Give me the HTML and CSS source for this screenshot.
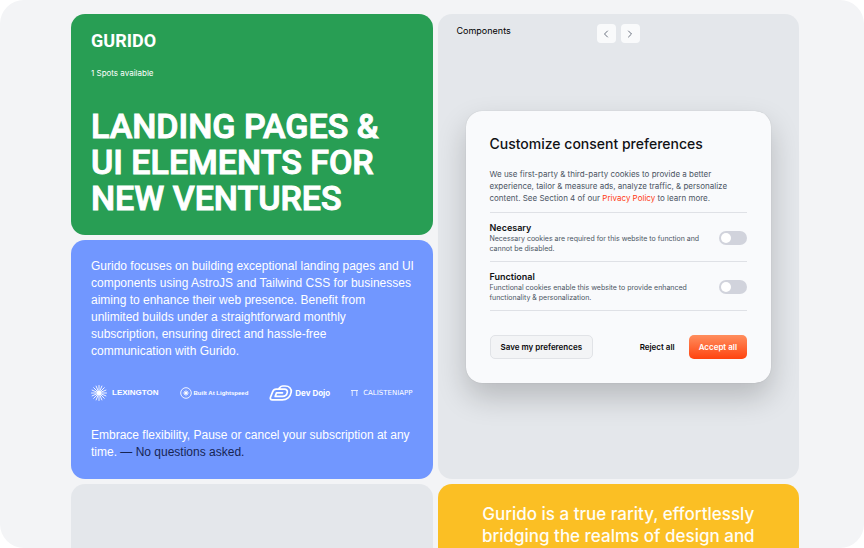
FILE: index.html
```
<!DOCTYPE html>
<html lang="en">
<head>
<meta charset="utf-8">
<meta name="viewport" content="width=device-width, initial-scale=1">
<title>Gurido</title>
<link rel="stylesheet" href="styles.css">
</head>
<body>
<div class="page">
  <main class="bento">
    <header class="card hero">
      <a class="brand" href="#">GURIDO</a>
      <p class="spots">1 Spots available</p>
      <h1 class="headline">LANDING PAGES &amp;<br>UI ELEMENTS FOR<br>NEW VENTURES</h1>
    </header>

    <section class="card about">
      <p>Gurido focuses on building exceptional landing pages and UI components using AstroJS and Tailwind CSS for businesses<br>aiming to enhance their web presence. Benefit from<br>unlimited builds under a straightforward monthly<br>subscription, ensuring direct and hassle-free<br>communication with Gurido.</p>
      <ul class="clients">
        <li class="client client-lexington">
          <svg width="16" height="16" viewBox="0 0 16 16" fill="none" stroke="currentColor" stroke-linecap="round">
            <circle cx="8" cy="8" r="2" fill="currentColor" stroke="none"/>
            <path stroke-width=".9" d="M8 .5v15M.5 8h15M2.7 2.7l10.600 10.600M13.300 2.700L2.700 13.300M5.130 1.070l5.740 13.860M10.870 1.070L5.130 14.930M1.070 5.130l13.860 5.740M1.070 10.870l13.860-5.740"/>
          </svg>
          <span>LEXINGTON</span>
        </li>
        <li class="client client-lightspeed">
          <svg width="12" height="12" viewBox="0 0 12 12" fill="none" stroke="currentColor">
            <circle cx="6" cy="6" r="5.300" stroke-width=".9"/>
            <circle cx="6" cy="6" r="1.600" fill="currentColor" stroke="none"/>
            <path stroke-width=".7" d="M6 2.800v6.400M2.800 6h6.400M3.800 3.800l4.400 4.400M8.200 3.800L3.800 8.200"/>
          </svg>
          <span>Built At Lightspeed</span>
        </li>
        <li class="client client-devdojo">
          <svg width="24" height="16" viewBox="0 0 24 16" fill="none" stroke="currentColor" stroke-width="1.700" stroke-linejoin="round" stroke-linecap="round">
            <path d="M9.500 4L11 2.300Q12 1 13.700 1h2.500c4 0 6.600 2.600 6 6.200-.7 4.600-4.400 7.600-9 7.600H3.300C1.400 14.800.9 13.600 1.500 12.200L3.700 6.600Q4.700 4.200 7.200 4.200h8.300c2 0 3.200 1.300 2.800 3.200-.5 2.600-2.200 4-4.800 4H6.200L7.500 7.800h6"/>
          </svg>
          <span>Dev Dojo</span>
        </li>
        <li class="client client-calisteniapp">
          <svg width="7" height="6" viewBox="0 0 7 6" fill="none" stroke="currentColor" stroke-width=".8">
            <path d="M0 .5h7M1.200 .5V6M5.800 .5V6"/>
          </svg>
          <span>CALISTENIAPP</span>
        </li>
      </ul>
      <p>Embrace flexibility, Pause or cancel your subscription at any time. <span class="aside">— No questions asked.</span></p>
    </section>

    <section class="card showcase">
      <div class="showcase-bar">
        <h2 class="showcase-title">Components</h2>
        <div class="pager">
          <button type="button" aria-label="Previous"><svg width="10" height="10" viewBox="0 0 10 10"><path d="M6.500 2L3.500 5l3 3"/></svg></button>
          <button type="button" aria-label="Next"><svg width="10" height="10" viewBox="0 0 10 10"><path d="M3.500 2l3 3-3 3"/></svg></button>
        </div>
      </div>
      <form class="consent">
        <h3 class="consent-title">Customize consent preferences</h3>
        <p class="consent-text">We use first-party &amp; third-party cookies to provide a better experience, tailor &amp; measure ads, analyze traffic, &amp; personalize content. See Section 4 of our <a href="#">Privacy Policy</a> to learn more.</p>
        <div class="options">
          <div class="option">
            <label for="necessary"><strong>Necesary</strong><span>Necessary cookies are required for this website to function and cannot be disabled.</span></label>
            <input class="switch" type="checkbox" role="switch" id="necessary">
          </div>
          <div class="option">
            <label for="functional"><strong>Functional</strong><span>Functional cookies enable this website to provide enhanced functionality &amp; personalization.</span></label>
            <input class="switch" type="checkbox" role="switch" id="functional">
          </div>
        </div>
        <div class="actions">
          <button class="btn btn-save" type="button">Save my preferences</button>
          <button class="btn btn-reject" type="button">Reject all</button>
          <button class="btn btn-accept" type="button">Accept all</button>
        </div>
      </form>
    </section>

    <section class="card preview"></section>

    <blockquote class="card quote">Gurido is a true rarity, effortlessly bridging the realms of design and</blockquote>
  </main>
</div>
</body>
</html>
```
FILE: styles.css
```
* { box-sizing: border-box; }

body, h1, h2, h3, p, ul, blockquote { margin: 0; }

body {
  background: #fff;
  font-family: Inter, "Liberation Sans", sans-serif;
  -webkit-font-smoothing: antialiased;
}

button { font: inherit; padding: 0; border: 0; }

.page {
  height: 100vh;
  overflow: hidden;
  padding: 14px 65px 0 71px;
  border-radius: 24px;
  background: #f3f4f6;
}

.bento {
  display: grid;
  grid-template-columns: 1fr 1fr;
  gap: 5px;
}

.card { border-radius: 14px; }

/* Hero */
.hero {
  display: flex;
  flex-direction: column;
  align-items: flex-start;
  padding: 17px 20px 19px;
  background: #289e54;
  color: #fff;
}

.brand, .headline {
  font-family: Roboto, sans-serif;
  font-weight: 500;
}

.brand {
  color: inherit;
  font-size: 18px;
  font-weight: 700;
  line-height: 20px;
  text-decoration: none;
}

.spots {
  margin-top: 16px;
  font-size: 8px;
  line-height: 12px;
}

.headline {
  margin-top: 29px;
  font-size: 34px;
  line-height: 36px;
  -webkit-text-stroke: 1px #fff;
  stroke-linejoin: round;
}

/* About */
.about {
  padding: 18px 14px 18px 20px;
  background: #7197ff;
  color: #fff;
  font-family: "Liberation Sans", Arial, sans-serif;
  font-size: 12px;
  line-height: 17px;
}

.aside { color: #172554; }

.clients {
  display: flex;
  justify-content: space-between;
  align-items: center;
  margin: 25px 6px 26px 0;
  padding: 0;
  list-style: none;
}

.client {
  display: flex;
  align-items: center;
  height: 16px;
  font-weight: 700;
  line-height: 12px;
  white-space: nowrap;
}

.client-lexington { gap: 5px; font-size: 8px; }
.client-lightspeed { gap: 2px; font-size: 6px; }
.client-devdojo {
  gap: 2px;
  font-family: Inter, sans-serif;
  font-size: 8px;
}
.client-calisteniapp {
  gap: 5px;
  font-family: "DejaVu Sans", sans-serif;
  font-size: 7px;
  font-weight: 400;
}

/* Showcase */
.showcase {
  grid-column: 2;
  grid-row: 1 / span 2;
  padding-top: 10px;
  background: #e4e7eb;
}

.showcase-bar {
  display: grid;
  grid-template-columns: 1fr auto 1fr;
  align-items: start;
  padding: 0 19px;
}

.showcase-title {
  font-size: 9px;
  font-weight: 400;
  line-height: 14px;
}

.pager { display: flex; gap: 5px; }

.pager button {
  display: grid;
  place-items: center;
  width: 19px;
  height: 19px;
  border-radius: 4px;
  background: #f9fafb;
}

.pager path {
  fill: none;
  stroke: #6b7280;
  stroke-linecap: round;
  stroke-linejoin: round;
}

/* Consent dialog */
.consent {
  margin: 68px 28px 0;
  padding: 24px;
  border-radius: 16px;
  background: #f9fafc;
  box-shadow: 0 14px 30px rgba(0, 0, 0, .2), 0 0 1px rgba(0, 0, 0, .2);
}

.consent-title {
  color: #111215;
  font-size: 14px;
  font-weight: 500;
  line-height: 18px;
}

.consent-text {
  margin-top: 15px;
  color: #4b5563;
  font-size: 8px;
  line-height: 12px;
}

.consent-text a { color: #ff3b14; text-decoration: none; }

.options {
  margin-top: 8px;
  border-bottom: 1px solid #dfe1e6;
}

.option {
  display: flex;
  align-items: center;
  justify-content: space-between;
  gap: 16px;
  padding: 8px 0 7px;
  border-top: 1px solid #dfe1e6;
}

.option label { flex: 1; }

.option strong {
  display: block;
  color: #111215;
  font-size: 9px;
  font-weight: 600;
  line-height: 13px;
}

.option span {
  display: block;
  color: #4b5563;
  font-size: 7px;
  line-height: 10px;
}

.switch {
  appearance: none;
  display: flex;
  align-items: center;
  width: 28px;
  height: 14px;
  margin: 0;
  padding: 2px;
  border-radius: 7px;
  background: #d1d3dc;
}

.switch::before {
  content: "";
  width: 10px;
  height: 10px;
  border-radius: 50%;
  background: #fff;
}

.switch:checked { justify-content: flex-end; background: #ff4612; }

.actions {
  display: flex;
  align-items: center;
  margin-top: 24px;
}

.btn {
  height: 24px;
  padding: 0 10px;
  border-radius: 5px;
  background: none;
  color: #09090b;
  font-size: 8px;
  font-weight: 600;
  white-space: nowrap;
}

.btn-save {
  margin-right: auto;
  border: 1px solid #e1e3e7;
  background: #f3f4f6;
}

.btn-reject { padding: 0 14px; }

.btn-accept {
  background: linear-gradient(#ff8e5e, #ff430f);
  color: #fff;
}

/* Bottom row */
.preview {
  min-height: 240px;
  background: #e4e7eb;
}

.quote {
  padding: 19px 40px;
  background: #fbbf24;
  color: #fffdf5;
  font-size: 17px;
  font-weight: 500;
  line-height: 22px;
  text-align: center;
}
```
